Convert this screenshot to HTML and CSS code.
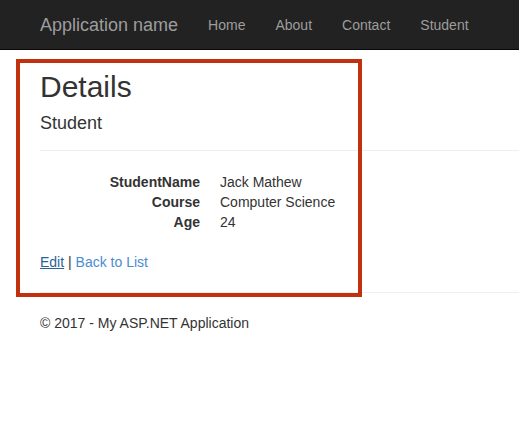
FILE: index.html
```
<!DOCTYPE html>
<html>
<head>
<meta charset="utf-8">
<link rel="stylesheet" href="styles.css">
</head>
<body>
<nav class="navbar">
  <a class="brand" href="#">Application name</a>
  <ul class="nav">
    <li><a href="#">Home</a></li>
    <li><a href="#">About</a></li>
    <li><a href="#">Contact</a></li>
    <li><a href="#">Student</a></li>
  </ul>
</nav>
<main class="body-content">
  <h2 class="title">Details</h2>
  <div>
    <h4 class="subtitle">Student</h4>
    <hr class="rule">
    <dl class="dl-horizontal">
      <dt>StudentName</dt><dd>Jack Mathew</dd>
      <dt>Course</dt><dd>Computer Science</dd>
      <dt>Age</dt><dd>24</dd>
    </dl>
  </div>
  <p class="actions"><a class="edit" href="#">Edit</a> | <a href="#">Back to List</a></p>
  <hr class="rule">
  <footer class="footer"><p>&copy; 2017 - My ASP.NET Application</p></footer>
</main>
<div class="highlight"></div>
</body>
</html>
```
FILE: styles.css
```
html, body { margin: 0; padding: 0; }
body {
  font-family: "Liberation Sans", Arial, Helvetica, sans-serif;
  font-size: 14px;
  line-height: 20px;
  color: #333;
  background: #fff;
  width: 519px;
  height: 441px;
  overflow: hidden;
  position: relative;
}
a { color: #4a8bd0; text-decoration: none; }
.navbar {
  height: 49px;
  background: #222;
  border-bottom: 1px solid #080808;
  display: flex;
  align-items: center;
  padding-left: 40px;
}
.brand {
  color: #9d9d9d;
  font-size: 18px;
  line-height: 20px;
  margin-right: 15px;
}
.nav {
  list-style: none;
  margin: 0;
  padding: 0;
  display: flex;
}
.nav a {
  display: block;
  color: #9d9d9d;
  padding: 0 15px;
  line-height: 20px;
}
.body-content {
  padding-left: 40px;
  padding-top: 1px;
}
.title {
  font-size: 30px;
  font-weight: 500;
  line-height: 33px;
  margin: 19px 0 10px;
}
.subtitle {
  font-size: 18px;
  font-weight: 500;
  line-height: 20px;
  margin: 10px 0 17px;
}
.rule {
  border: 0;
  border-top: 1px solid #eee;
  margin: 0;
  height: 0;
}
.dl-horizontal {
  margin: 21px 0 20px;
  display: grid;
  grid-template-columns: 160px 1fr;
  column-gap: 20px;
}
.dl-horizontal dt {
  font-weight: bold;
  text-align: right;
}
.dl-horizontal dd { margin: 0; }
.actions { margin: 0 0 20px; }
.actions .edit { color: #2a6496; text-decoration: underline; }
.footer p { margin: 20px 0 0; }
.highlight {
  position: absolute;
  left: 16px;
  top: 59px;
  width: 338px;
  height: 230px;
  border: 4px solid #c1310f;
}
```
